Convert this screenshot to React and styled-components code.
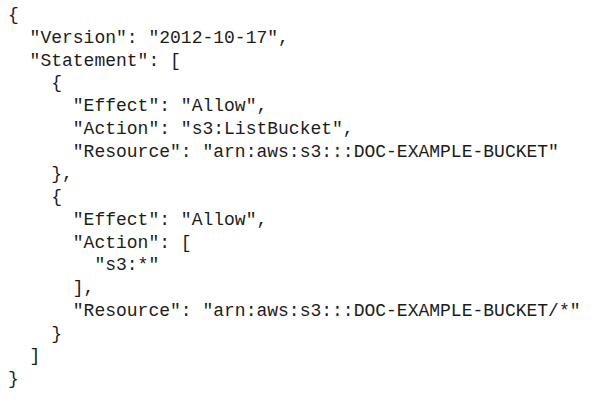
import React from 'react';
import styled, { createGlobalStyle } from 'styled-components';

const GlobalStyle = createGlobalStyle`
  html, body {
    margin: 0;
    padding: 0;
    background: #ffffff;
  }
`;

const CodeBlock = styled.pre`
  margin: 0;
  padding: 4px 0 0 8px;
  font-family: "Liberation Mono", "Courier New", monospace;
  font-size: 18px;
  line-height: 22.75px;
  color: #1c1c1c;
  white-space: pre;
`;

const policy = {
  Version: '2012-10-17',
  Statement: [
    {
      Effect: 'Allow',
      Action: 's3:ListBucket',
      Resource: 'arn:aws:s3:::DOC-EXAMPLE-BUCKET',
    },
    {
      Effect: 'Allow',
      Action: ['s3:*'],
      Resource: 'arn:aws:s3:::DOC-EXAMPLE-BUCKET/*',
    },
  ],
};

const App = () => (
  <>
    <GlobalStyle />
    <CodeBlock>{JSON.stringify(policy, null, 2)}</CodeBlock>
  </>
);

export default App;
